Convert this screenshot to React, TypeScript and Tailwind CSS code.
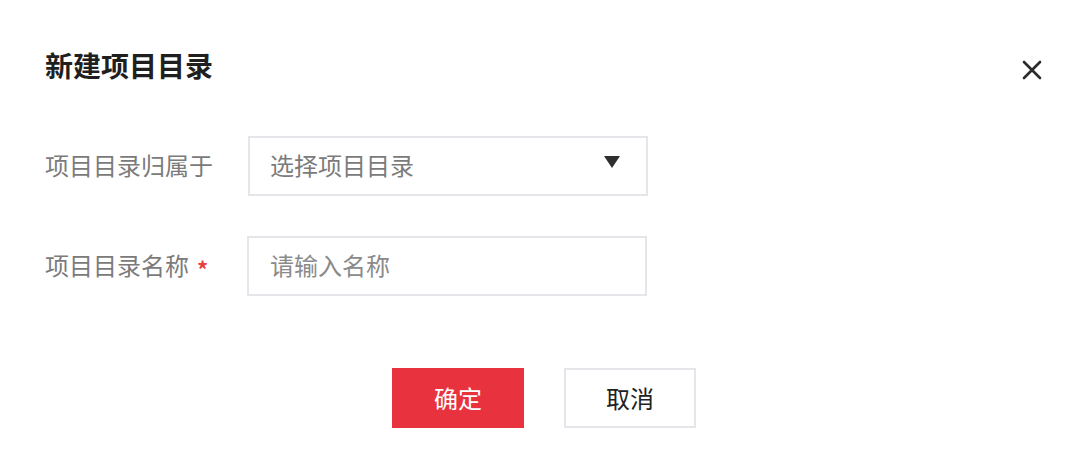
import React from "react";

export default function App() {
  return (
    <div
      className="w-[1080px] h-[456px] bg-white relative overflow-hidden"
      style={{ fontFamily: '"Noto Sans CJK SC", "Noto Sans", sans-serif' }}
    >
      <div className="flex items-center justify-between pl-[45px] pr-[38px] pt-[47px]">
        <h1 className="text-[28px] leading-[36px] font-bold text-[#1f1f1f]">新建项目目录</h1>
        <button className="w-[20px] h-[20px] mt-[10px] flex items-center justify-center">
          <svg width="20" height="20" viewBox="0 0 20 20">
            <path d="M2 2 L18 18 M18 2 L2 18" stroke="#2b2b2b" strokeWidth="2.6" strokeLinecap="round" />
          </svg>
        </button>
      </div>

      <div className="flex flex-col gap-[40px] pl-[45px] mt-[53px]">
        <div className="flex items-center">
          <div className="w-[203px] text-[24px] leading-[32px] text-[#7b7b7b] -mt-[3px]">项目目录归属于</div>
          <div className="w-[400px] h-[60px] border-2 border-[#e5e5ea] flex items-center justify-between pl-[20px] pr-[26px]">
            <span className="text-[24px] leading-[32px] text-[#7b7b7b] -mt-[2px]">选择项目目录</span>
            <svg width="16" height="12" viewBox="0 0 16 12" className="-mt-[9px]">
              <polygon points="0,0 16,0 8,12" fill="#2f2f2f" />
            </svg>
          </div>
        </div>
        <div className="flex items-center">
          <div className="w-[202px] flex items-center text-[24px] leading-[32px] text-[#7b7b7b] -mt-[3px]">
            项目目录名称
            <span className="ml-[8px] text-[22px] font-bold text-[#e8403f] mt-[6px]">*</span>
          </div>
          <div className="w-[400px] h-[60px] border-2 border-[#e5e5ea] flex items-center pl-[21px]">
            <span className="text-[24px] leading-[32px] text-[#8a8a8a] -mt-[2px]">请输入名称</span>
          </div>
        </div>
      </div>

      <div className="flex gap-[40px] pl-[392px] mt-[72px]">
        <button className="w-[132px] h-[60px] bg-[#e8333f] text-white text-[24px] flex items-center justify-center">
          确定
        </button>
        <button className="w-[132px] h-[60px] border-2 border-[#e5e5ea] bg-white text-[#222] text-[24px] flex items-center justify-center">
          取消
        </button>
      </div>
    </div>
  );
}
